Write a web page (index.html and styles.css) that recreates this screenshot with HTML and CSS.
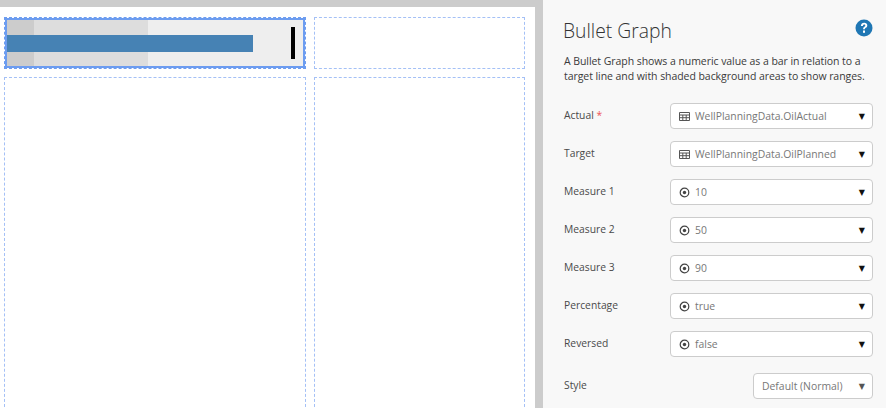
FILE: index.html
```html
<!DOCTYPE html>
<html lang="en">
<head>
<meta charset="utf-8">
<title>Bullet Graph</title>
<link rel="stylesheet" href="styles.css">
</head>
<body>
<main class="workspace">
  <section class="canvas">
    <div class="cell selected">
      <div class="bullet">
        <div class="range r3"></div>
        <div class="range r2"></div>
        <div class="range r1"></div>
        <div class="bar"></div>
        <div class="target"></div>
      </div>
    </div>
    <div class="cell"></div>
    <div class="cell"></div>
    <div class="cell"></div>
  </section>
</main>
<aside class="panel">
  <header class="head">
    <h1>Bullet Graph</h1>
    <svg class="help" viewBox="0 0 18 18" width="18" height="18"><circle cx="9" cy="9" r="8.5" fill="#1f77b4"/><path d="M5.900 7c.1-2 1.400-3.200 3.300-3.200 1.800 0 3.100 1.100 3.100 2.600 0 1.200-.7 1.800-1.500 2.400-.7.500-.9.800-.9 1.500H8.100c0-1.300.4-1.900 1.200-2.500.7-.5 1-.8 1-1.300 0-.6-.5-1-1.100-1-.7 0-1.200.5-1.300 1.500z" fill="#fff"/><rect x="8" y="11.500" width="2" height="2.300" fill="#fff"/></svg>
  </header>
  <p class="desc">A Bullet Graph shows a numeric value as a bar in relation to a target line and with shaded background areas to show ranges.</p>
  <form class="fields">
    <div class="row"><span class="label">Actual <b>*</b></span><div class="select"><svg class="ico" viewBox="0 0 11 9" width="11" height="9"><path d="M.5.500h10v8H.500zM.5 3h10M.5 5.700h10M3.800 3v5.500M7.200 3v5.500" fill="none" stroke="#555"/></svg><span class="val">WellPlanningData.OilActual</span><i class="caret">▼</i></div></div>
    <div class="row"><span class="label">Target</span><div class="select"><svg class="ico" viewBox="0 0 11 9" width="11" height="9"><path d="M.5.500h10v8H.500zM.5 3h10M.5 5.700h10M3.800 3v5.500M7.200 3v5.500" fill="none" stroke="#555"/></svg><span class="val">WellPlanningData.OilPlanned</span><i class="caret">▼</i></div></div>
    <div class="row"><span class="label">Measure 1</span><div class="select"><svg class="ico" viewBox="0 0 11 11" width="11" height="11"><circle cx="5.500" cy="5.500" r="4.300" fill="none" stroke="#444" stroke-width="1.200"/><circle cx="5.500" cy="5.500" r="1.700" fill="#444"/></svg><span class="val">10</span><i class="caret">▼</i></div></div>
    <div class="row"><span class="label">Measure 2</span><div class="select"><svg class="ico" viewBox="0 0 11 11" width="11" height="11"><circle cx="5.500" cy="5.500" r="4.300" fill="none" stroke="#444" stroke-width="1.200"/><circle cx="5.500" cy="5.500" r="1.700" fill="#444"/></svg><span class="val">50</span><i class="caret">▼</i></div></div>
    <div class="row"><span class="label">Measure 3</span><div class="select"><svg class="ico" viewBox="0 0 11 11" width="11" height="11"><circle cx="5.500" cy="5.500" r="4.300" fill="none" stroke="#444" stroke-width="1.200"/><circle cx="5.500" cy="5.500" r="1.700" fill="#444"/></svg><span class="val">90</span><i class="caret">▼</i></div></div>
    <div class="row"><span class="label">Percentage</span><div class="select"><svg class="ico" viewBox="0 0 11 11" width="11" height="11"><circle cx="5.500" cy="5.500" r="4.300" fill="none" stroke="#444" stroke-width="1.200"/><circle cx="5.500" cy="5.500" r="1.700" fill="#444"/></svg><span class="val">true</span><i class="caret">▼</i></div></div>
    <div class="row"><span class="label">Reversed</span><div class="select"><svg class="ico" viewBox="0 0 11 11" width="11" height="11"><circle cx="5.500" cy="5.500" r="4.300" fill="none" stroke="#444" stroke-width="1.200"/><circle cx="5.500" cy="5.500" r="1.700" fill="#444"/></svg><span class="val">false</span><i class="caret">▼</i></div></div>
    <div class="row style-row"><span class="label">Style</span><div class="select small"><span class="val">Default (Normal)</span><i class="caret">▼</i></div></div>
  </form>
</aside>
</body>
</html>
```
FILE: styles.css
```css
* { box-sizing: border-box; }
html, body { margin: 0; height: 100%; }
body {
  display: flex;
  width: 886px;
  height: 408px;
  overflow: hidden;
  font-family: "Open Sans", "Noto Sans", sans-serif;
  color: #333;
}
.workspace {
  width: 543px;
  flex: none;
  background: #ccc;
  padding: 7px 8px 0 0;
}
.canvas {
  height: 100%;
  background: #fff;
  padding: 10px 10px 0 4px;
  display: grid;
  grid-template-columns: 302px 211px;
  grid-template-rows: 52px 1fr;
  column-gap: 8px;
  row-gap: 8px;
}
.cell {
  border: 1px dashed #a4c0f6;
}
.cell:nth-child(n+3) { margin-bottom: -4px; }
.cell.selected {
  border: 1px dashed #6c9cf0;
  outline: 2px solid #6c9cf0;
  outline-offset: -3px;
  padding: 2px;
}
.bullet {
  position: relative;
  height: 100%;
  background: #eee;
}
.range, .bar, .target { position: absolute; left: 0; }
.range { top: 0; bottom: 0; }
.r1 { width: 27px; background: #ccc; }
.r2 { width: 141px; background: #ddd; }
.r3 { width: 100%; background: #eee; }
.bar { top: 15px; height: 17px; width: 246px; background: #4682b4; }
.target { top: 7px; height: 32px; left: 284px; width: 4px; background: #000; }
.panel {
  flex: 1;
  background: #f8f8f8;
  padding: 0 13px 0 21px;
}
.head {
  display: flex;
  justify-content: space-between;
  align-items: flex-start;
  height: 54px;
  padding-top: 17px;
}
h1 {
  margin: 0 0 0 -1px;
  font-size: 19.300px;
  font-weight: 300;
  line-height: 27px;
  color: #333;
}
.help { margin: 2px 0 0 0; }
.desc {
  margin: 0;
  font-size: 10.500px;
  line-height: 15px;
  height: 49px;
  letter-spacing: -.06px;
  color: #3a3a3a;
}
.fields { display: flex; flex-direction: column; gap: 12px; }
.row {
  display: flex;
  justify-content: space-between;
  align-items: center;
  height: 26px;
}
.label { font-size: 10.300px; color: #4a4a4a; margin-top: -3px; }
.label b { color: #e55; font-weight: 400; }
.select {
  width: 203px;
  height: 26px;
  display: flex;
  align-items: center;
  background: #fff;
  border: 1px solid #ccc;
  border-radius: 4px;
  padding: 0 8px;
  font-size: 10.400px;
  color: #777;
}
.ico { flex: none; margin-right: 5px; }
.val { flex: 1; white-space: nowrap; }
.caret { font-style: normal; font-size: 8px; color: #111; font-family: "DejaVu Sans", sans-serif; margin-right: -1px; }
.style-row { margin-top: 4px; }
.select.small { width: 120px; padding-left: 8px; }
.select.small .caret { color: #555; }
```
